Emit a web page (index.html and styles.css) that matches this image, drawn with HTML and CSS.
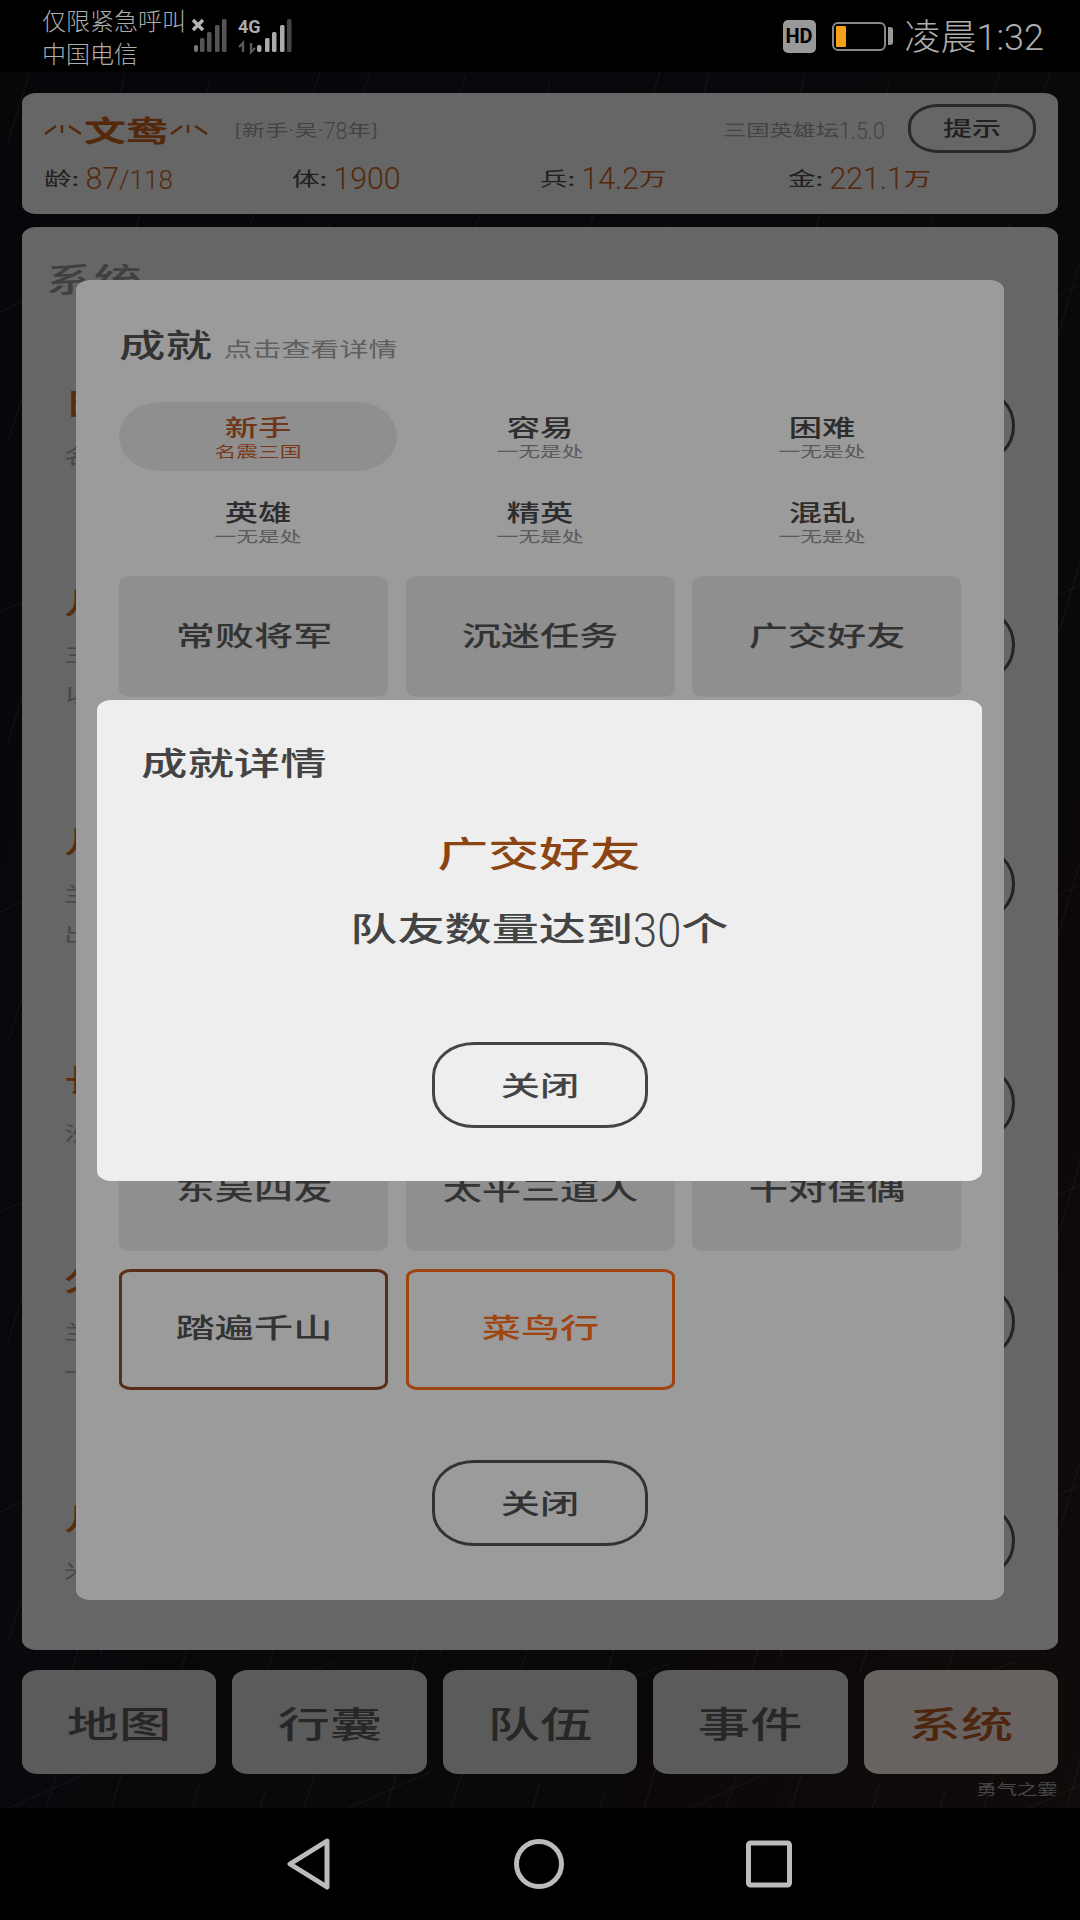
FILE: index.html
```html
<!DOCTYPE html>
<html lang="zh-CN">
<head>
    <meta charset="UTF-8">
    <meta name="viewport" content="width=device-width, initial-scale=1.0">
    <title>三国英雄坛</title>
    <link rel="stylesheet" href="styles.css">
</head>
<body>

<div class="phone">
    <!-- Status bar -->
    <div class="status-bar">
        <div class="carrier">
            <div>仅限紧急呼叫</div>
            <div>中国电信</div>
        </div>
        <svg class="signal" width="105" height="40" viewBox="0 0 105 40">
            <path d="M1 4 L11 14 M11 4 L1 14" stroke="#b5b5b5" stroke-width="3.4"/>
            <g fill="#555" stroke="none">
                <rect x="2" y="29" width="4" height="7" rx="2" fill="#777"/>
                <rect x="8" y="22" width="4.5" height="14" rx="1.5"/>
                <rect x="15" y="16" width="4.5" height="20" rx="1.5"/>
                <rect x="23" y="9" width="4.5" height="27" rx="1.5"/>
                <rect x="30" y="3" width="4.5" height="33" rx="1.5"/>
            </g>
            <text class="net" x="46" y="17">4G</text>
            <path d="M51 36 V27 L47 31 M59 27 V36 L63 32" stroke="#5a5a5a" stroke-width="2.4" fill="none"/>
            <g fill="#ababab">
                <rect x="65" y="29" width="4.5" height="7" rx="2"/>
                <rect x="73" y="22" width="4.5" height="14" rx="1.5"/>
                <rect x="80" y="16" width="4.5" height="20" rx="1.5"/>
                <rect x="88" y="9" width="4.5" height="27" rx="1.5"/>
                <rect x="95" y="3" width="4.5" height="33" rx="1.5" fill="#444"/>
            </g>
        </svg>
        <div class="status-right">
            <span class="hd">HD</span>
            <span class="battery"><span class="battery-fill"></span></span>
            <span class="battery-cap"></span>
            <span class="clock">凌晨<span class="clock-num">1:32</span></span>
        </div>
    </div>

    <div class="game">
        <svg class="rain" width="1080" height="1736">
            <defs>
                <pattern id="rain-tile" width="340" height="300" patternUnits="userSpaceOnUse">
                    <g stroke="#fff" stroke-opacity="0.12" stroke-width="1" fill="none">
                        <path d="M30 0 L8 70"/>
                        <path d="M90 40 L62 130"/>
                        <path d="M125 5 L100 85"/>
                        <path d="M150 110 L110 240"/>
                        <path d="M210 10 L180 100"/>
                        <path d="M280 60 L235 200"/>
                        <path d="M320 0 L295 75"/>
                        <path d="M330 150 L300 250"/>
                        <path d="M60 190 L30 290"/>
                        <path d="M200 210 L175 295"/>
                        <path d="M265 220 L240 298"/>
                        <path d="M0 240 L90 200"/>
                        <path d="M250 120 L335 90"/>
                    </g>
                </pattern>
            </defs>
            <rect width="1080" height="1736" fill="url(#rain-tile)"/>
        </svg>

        <div class="game-inner">
            <div class="info-card">
                <div class="info-top">
                    <div class="hero">
                        <svg class="orn" width="38" height="12" viewBox="0 0 38 12"><path d="M1 11 L12 3 M18 2 L18 10 M25 3 L37 11" stroke="#c8621c" stroke-width="2.4" fill="none"/></svg>
                        <span class="hero-name"><span class="wide">文鸯</span></span>
                        <svg class="orn" width="38" height="12" viewBox="0 0 38 12"><path d="M1 11 L12 3 M18 2 L18 10 M25 3 L37 11" stroke="#c8621c" stroke-width="2.4" fill="none"/></svg>
                        <span class="hero-tag wide-l">[新手<span class="dot">·</span>吴<span class="dot">·</span><span class="num">78</span>年]</span>
                    </div>
                    <div class="info-right">
                        <span class="version"><span class="wide-l">三国英雄坛<span class="num">1.5.0</span></span></span>
                        <div class="hint-btn"><span class="wide">提示</span></div>
                    </div>
                </div>
                <div class="stats">
                    <div class="stat"><span class="wide-l">龄: <span class="val num">87</span><span class="val num num-small">/118</span></span></div>
                    <div class="stat"><span class="wide-l">体: <span class="val num">1900</span></span></div>
                    <div class="stat"><span class="wide-l">兵: <span class="val num">14.2</span><span class="val">万</span></span></div>
                    <div class="stat"><span class="wide-l">金: <span class="val num">221.1</span><span class="val">万</span></span></div>
                </div>
            </div>

            <div class="panel">
                <div class="panel-title"><span class="wide-l">系统</span></div>
                <div class="row">
                    <div><div class="row-title"><span class="wide-l">日</span></div><div class="row-sub"><span class="wide-l">名</span></div></div>
                    <div class="row-btn"></div>
                </div>
                <div class="row">
                    <div><div class="row-title"><span class="wide-l">几</span></div><div class="row-sub"><span class="wide-l">三</span></div><div class="row-sub"><span class="wide-l">以</span></div></div>
                    <div class="row-btn"></div>
                </div>
                <div class="row">
                    <div><div class="row-title"><span class="wide-l">几</span></div><div class="row-sub"><span class="wide-l">兰</span></div><div class="row-sub"><span class="wide-l">出</span></div></div>
                    <div class="row-btn"></div>
                </div>
                <div class="row">
                    <div><div class="row-title"><span class="wide-l">长</span></div><div class="row-sub"><span class="wide-l">沙</span></div></div>
                    <div class="row-btn"></div>
                </div>
                <div class="row">
                    <div><div class="row-title"><span class="wide-l">久</span></div><div class="row-sub"><span class="wide-l">兰</span></div><div class="row-sub"><span class="wide-l">一</span></div></div>
                    <div class="row-btn"></div>
                </div>
                <div class="row">
                    <div><div class="row-title"><span class="wide-l">几</span></div><div class="row-sub"><span class="wide-l">米</span></div></div>
                    <div class="row-btn"></div>
                </div>
            </div>

            <div class="tabs">
                <div class="tab"><span class="wide">地图</span></div>
                <div class="tab"><span class="wide">行囊</span></div>
                <div class="tab"><span class="wide">队伍</span></div>
                <div class="tab"><span class="wide">事件</span></div>
                <div class="tab tab-active"><span class="wide">系统</span></div>
            </div>
            <div class="credit"><span class="wide">勇气之霎</span></div>
        </div>

        <div class="mask"></div>

        <!-- Achievement list -->
        <div class="modal modal-list">
            <div class="list-title"><span class="wide-l">成就<small>点击查看详情</small></span></div>
            <div class="levels">
                <div class="level level-active"><div class="level-name"><span class="wide">新手</span></div><div class="level-sub"><span class="wide">名震三国</span></div></div>
                <div class="level"><div class="level-name"><span class="wide">容易</span></div><div class="level-sub"><span class="wide">一无是处</span></div></div>
                <div class="level"><div class="level-name"><span class="wide">困难</span></div><div class="level-sub"><span class="wide">一无是处</span></div></div>
                <div class="level"><div class="level-name"><span class="wide">英雄</span></div><div class="level-sub"><span class="wide">一无是处</span></div></div>
                <div class="level"><div class="level-name"><span class="wide">精英</span></div><div class="level-sub"><span class="wide">一无是处</span></div></div>
                <div class="level"><div class="level-name"><span class="wide">混乱</span></div><div class="level-sub"><span class="wide">一无是处</span></div></div>
            </div>
            <div class="medals">
                <div class="medal"><span class="wide">常败将军</span></div>
                <div class="medal"><span class="wide">沉迷任务</span></div>
                <div class="medal"><span class="wide">广交好友</span></div>
                <div class="medal"></div>
                <div class="medal"></div>
                <div class="medal"></div>
                <div class="medal"></div>
                <div class="medal"></div>
                <div class="medal"></div>
                <div class="medal"></div>
                <div class="medal"></div>
                <div class="medal"></div>
                <div class="medal"><span class="wide">东吴四友</span></div>
                <div class="medal"><span class="wide">太平三道人</span></div>
                <div class="medal"><span class="wide">十对佳偶</span></div>
                <div class="medal medal-brown"><span class="wide">踏遍千山</span></div>
                <div class="medal medal-orange"><span class="wide">菜鸟行</span></div>
            </div>
            <div class="close-btn list-close"><span class="wide">关闭</span></div>
        </div>

        <div class="mask"></div>

        <!-- Achievement detail -->
        <div class="modal modal-detail">
            <div class="detail-title"><span class="wide-l">成就详情</span></div>
            <div class="detail-name"><span class="wide">广交好友</span></div>
            <div class="detail-desc"><span class="wide">队友数量达到<span class="num">30</span>个</span></div>
            <div class="close-btn detail-close"><span class="wide">关闭</span></div>
        </div>
    </div>

    <!-- Navigation bar -->
    <div class="nav-bar">
        <svg width="46" height="52" viewBox="0 0 46 52"><path d="M41 3 L4 26 L41 49 Z" fill="none" stroke="#bbb" stroke-width="5" stroke-linejoin="round"/></svg>
        <svg width="52" height="52" viewBox="0 0 52 52"><circle cx="26" cy="26" r="22.5" fill="none" stroke="#bbb" stroke-width="5"/></svg>
        <svg width="46" height="48" viewBox="0 0 46 48"><rect x="2.5" y="3" width="41" height="42" rx="2" fill="none" stroke="#bbb" stroke-width="5"/></svg>
    </div>
</div>

</body>
</html>
```

FILE: styles.css
```css
* {
    box-sizing: border-box;
}
body {
    margin: 0;
    background: #000;
    font-family: "Noto Sans CJK SC", "Noto Sans", sans-serif;
}
.phone {
    width: 1080px;
    height: 1920px;
    display: flex;
    flex-direction: column;
    overflow: hidden;
}

/* text in the game is drawn wider than it is tall */
.wide, .wide-l {
    display: inline-block;
    white-space: nowrap;
    transform: scaleX(1.45);
}
.wide-l {
    transform-origin: left center;
}
.num {
    display: inline-block;
    font-family: Roboto, sans-serif;
    font-weight: 300;
    font-size: 0.92em;
    line-height: 1;
    transform: scaleY(1.6);
}
.dot {
    font-family: Roboto, sans-serif;
}

/* status bar */
.status-bar {
    height: 72px;
    background: #000;
    display: flex;
    align-items: center;
    padding-left: 42px;
    color: #adadad;
}
.carrier {
    font-size: 24px;
    line-height: 33px;
    font-weight: 300;
    width: 150px;
    white-space: nowrap;
}
.net {
    font-family: "Roboto", sans-serif;
    font-weight: 700;
    font-size: 18px;
    fill: #ababab;
}
.status-right {
    margin-left: auto;
    margin-right: 36px;
    display: flex;
    align-items: center;
}
.hd {
    width: 33px;
    height: 33px;
    border-radius: 5px;
    background: #999;
    color: #000;
    font: 700 20px/33px Roboto, sans-serif;
    text-align: center;
}
.battery {
    width: 54px;
    height: 29px;
    margin-left: 16px;
    border: 2px solid #888;
    border-radius: 6px;
    padding: 2px;
}
.battery-fill {
    display: block;
    width: 10px;
    height: 100%;
    background: #f7a01c;
    border-radius: 1px;
}
.battery-cap {
    width: 5px;
    height: 18px;
    margin-left: 2px;
    background: #999;
    border-radius: 0 3px 3px 0;
}
.clock {
    margin-left: 12px;
    font-size: 36px;
    font-weight: 300;
    line-height: 44px;
}
.clock-num {
    font-family: Roboto, sans-serif;
    font-weight: 300;
}

/* game area */
.game {
    position: relative;
    height: 1736px;
    background: linear-gradient(115deg, #0e1218 0%, #12161e 40%, #1d1416 75%, #2a1c1c 100%);
}
.rain {
    position: absolute;
    left: 0;
    top: 0;
}
.game-inner {
    position: relative;
    height: 100%;
    padding: 21px 22px 0;
    display: flex;
    flex-direction: column;
}
.mask {
    position: absolute;
    inset: 0;
    background: rgba(0, 0, 0, 0.35);
}

/* hero card */
.info-card {
    height: 121px;
    background: #f1f1f1;
    border-radius: 14px / 10px;
    padding: 11px 22px 0;
}
.info-top {
    display: flex;
    align-items: center;
    justify-content: space-between;
    height: 49px;
}
.hero {
    display: flex;
    align-items: center;
    height: 100%;
    color: #c8621c;
}
.hero-name {
    width: 88px;
    text-align: center;
    font-size: 29px;
    font-weight: 700;
    line-height: 40px;
}
.hero-tag {
    margin-left: 26px;
    margin-top: 0;
    font-size: 16px;
    color: #a0a0a0;
}
.info-right {
    display: flex;
    align-items: center;
    color: #a0a0a0;
}
.version {
    width: 162px;
    font-size: 16px;
    margin-right: 23px;
}
.hint-btn {
    width: 128px;
    height: 49px;
    border: 3px solid #636363;
    border-radius: 30px / 22px;
    text-align: center;
    font-size: 20px;
    line-height: 41px;
    font-weight: 500;
    color: #505050;
}
.stats {
    display: flex;
    margin-top: 10px;
    font-size: 19px;
    line-height: 30px;
    color: #4a4a4a;
}
.stat {
    width: 248px;
}
.val {
    color: #c8621c;
}
.val.num {
    font-size: 1.1em;
    transform: scaleY(1.5);
}
.val.num-small {
    font-size: 0.95em;
    transform: scaleY(1.45);
}

/* system panel */
.panel {
    height: 1423px;
    margin-top: 13px;
    padding: 33px 43px 0 42px;
    background: #f1f1f1;
    border-radius: 14px / 10px;
    overflow: hidden;
}
.panel-title {
    margin-left: -18px;
    font-size: 33px;
    line-height: 36px;
    font-weight: 500;
    color: #999;
    height: 126px;
}
.row {
    display: flex;
    align-items: center;
    justify-content: space-between;
    margin-bottom: 119px;
}
.row-title {
    font-size: 30px;
    line-height: 30px;
    font-weight: 500;
    color: #d2691e;
    margin-bottom: 30px;
}
.row-sub {
    font-size: 20px;
    line-height: 20px;
    color: #aaa;
    margin-bottom: 20px;
}
.row-sub:last-child {
    margin-bottom: 0;
}
.row-btn {
    width: 200px;
    height: 76px;
    border: 3px solid #555;
    border-radius: 38px;
}

/* bottom tabs */
.tabs {
    display: grid;
    grid-template-columns: repeat(5, 1fr);
    gap: 16px;
    margin-top: 20px;
}
.tab {
    height: 104px;
    background: #d8d8d8;
    border-radius: 16px / 12px;
    text-align: center;
    font-size: 36px;
    line-height: 104px;
    font-weight: 500;
    color: #5c5c5c;
}
.tab-active {
    background: #f6ece4;
    color: #b85a24;
}
.credit {
    text-align: right;
    padding-right: 13px;
    margin-top: 4px;
    font-size: 14px;
    line-height: 20px;
    color: #a8a8a8;
}

/* modals */
.modal {
    position: absolute;
    background: #eee;
    border-radius: 14px / 10px;
}
.modal-list {
    left: 76px;
    top: 208px;
    width: 928px;
    height: 1320px;
    padding: 41px 43px 0;
    color: #4f4f4f;
}
.list-title {
    font-size: 32px;
    line-height: 44px;
    font-weight: 500;
}
.list-title small {
    margin-left: 8px;
    font-size: 20px;
    font-weight: 400;
    color: #929292;
}
.levels {
    display: grid;
    grid-template-columns: repeat(3, 278px);
    column-gap: 4px;
    margin-top: 31px;
}
.level {
    height: 69px;
    margin-bottom: 16px;
    text-align: center;
    border-radius: 40px / 35px;
    padding-top: 10px;
}
.level-active {
    background: #dcdcdc;
}
.level-name {
    font-size: 23px;
    line-height: 28px;
    font-weight: 500;
    color: #454545;
}
.level-sub {
    margin-top: 1px;
    font-size: 15px;
    line-height: 20px;
    color: #8a8a8a;
}
.level-active .level-name {
    color: #ac5328;
}
.level-active .level-sub {
    color: #ba5a2b;
}
.medals {
    display: grid;
    grid-template-columns: repeat(3, 269px);
    grid-auto-rows: 121px;
    column-gap: 17.5px;
    row-gap: 17.6px;
    margin-top: 4px;
}
.medal {
    background: #dcdcdc;
    border-radius: 12px / 8px;
    display: flex;
    align-items: center;
    justify-content: center;
    padding-bottom: 5px;
    font-size: 27px;
    font-weight: 500;
    color: #4f4f4f;
}
.medal-brown, .medal-orange {
    background: none;
    border: 3px solid #8b4523;
}
.medal-orange {
    border-color: #f56a1c;
    color: #f56a1c;
}
.close-btn {
    width: 216px;
    height: 86px;
    border: 3px solid #4f4f4f;
    border-radius: 42px / 34px;
    text-align: center;
    font-size: 27px;
    line-height: 80px;
    font-weight: 500;
    color: #4f4f4f;
}
.list-close {
    margin: 70px auto 0 313px;
}
.modal-detail {
    left: 97px;
    top: 628px;
    width: 885px;
    height: 481px;
    padding: 38px 44px 0;
    color: #444;
}
.detail-title {
    font-size: 32px;
    line-height: 46px;
    font-weight: 500;
}
.detail-name {
    margin-top: 45px;
    text-align: center;
    font-size: 35px;
    line-height: 46px;
    font-weight: 500;
    color: #8b4513;
}
.detail-desc {
    margin-top: 30px;
    text-align: center;
    font-size: 32.5px;
    line-height: 44px;
    font-weight: 500;
}
.detail-desc .num {
    font-size: 0.92em;
}
.detail-close {
    margin: 93px auto 0;
    border-color: #444;
    color: #444;
}

/* navigation bar */
.nav-bar {
    height: 112px;
    background: #000;
    display: flex;
    align-items: center;
    padding-left: 286px;
    padding-right: 288px;
    justify-content: space-between;
}
```
